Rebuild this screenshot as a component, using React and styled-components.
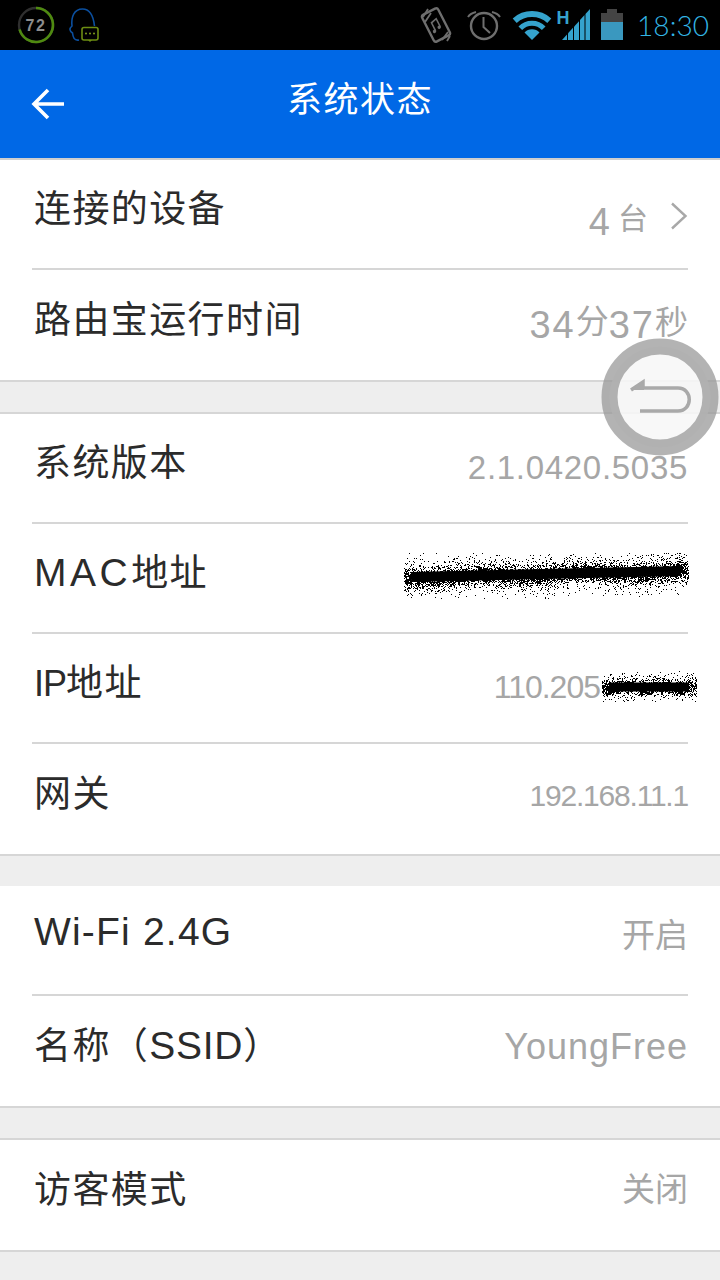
import React from "react";
import styled, { createGlobalStyle } from "styled-components";

const GlobalStyle = createGlobalStyle`
  html, body {
    margin: 0;
    padding: 0;
    background: #eeeeee;
    overflow: hidden;
  }
  body {
    font-family: "Liberation Sans", "Noto Sans CJK SC", sans-serif;
  }
`;

const TEAL = "#35a3cd";
const GREY = "#6e6e6e";

// seeded dots so the scribble looks the same on every run
const scribblePath = (w, h, y0, y1, count, seed) => {
  let s = seed;
  const rnd = () => {
    s = (s * 1664525 + 1013904223) % 4294967296;
    return s / 4294967296;
  };
  const gauss = () => (rnd() + rnd() + rnd() + rnd() - 2) / 2;
  let d = "";
  for (let i = 0; i < count; i++) {
    const t = rnd();
    const x = Math.round(2 + t * (w - 4));
    const mid = y0 + (y1 - y0) * t + Math.sin(t * 17) * 1.5;
    // most dots pile up in the core, the rest scatter around it
    const spread = i % 3 === 0 ? h * 0.72 : h * 0.34;
    const y = Math.round(mid + gauss() * spread);
    d += `M${x} ${y}h1v1h-1z`;
  }
  return d;
};

const Scribble = ({ width, height, from, to, thick, count, seed, className }) => (
  <svg className={className} width={width} height={height} viewBox={`0 0 ${width} ${height}`}>
    <path d={scribblePath(width, height, from, to, count, seed)} fill="#000" />
    <path d={`M9 ${from}L${width - 9} ${to}`} stroke="#000" strokeWidth={thick} />
  </svg>
);

const Page = styled.div`
  width: 720px;
  height: 1280px;
  position: relative;
  overflow: hidden;
  background: #eeeeee;
`;

const StatusBar = styled.div`
  height: 50px;
  background: #000;
  display: flex;
  align-items: flex-start;
`;

const Glyph = styled.svg`
  display: block;
  flex: none;
  margin-left: ${(p) => p.$left || 0}px;
`;

const Clock = styled.span`
  margin-left: 13px;
  font-family: "Lato", sans-serif;
  font-weight: 300;
  font-size: 28px;
  line-height: 50px;
  letter-spacing: 0.1px;
  color: #33b5e5;
  white-space: nowrap;
`;

const Header = styled.header`
  height: 108px;
  border-bottom: 2px solid #cfcfcf;
  background: #0068e6;
  display: flex;
  align-items: center;
  justify-content: center;
  position: relative;
`;

const BackButton = styled.svg`
  position: absolute;
  left: 30px;
  top: 35px;
`;

const Title = styled.h1`
  margin: 0 0 16px;
  font-size: 35px;
  font-weight: 400;
  letter-spacing: 1.5px;
  color: #fff;
`;

const Group = styled.section`
  background: #fff;
  border-top: ${(p) => (p.$plain ? "none" : "2px solid #d6d6d6")};
  border-bottom: 2px solid #d6d6d6;
  margin-bottom: 30px;
`;

const Row = styled.div`
  height: 110px;
  box-sizing: border-box;
  margin: 0 32px;
  padding: 0 0 16px 2px;
  display: flex;
  align-items: center;
  justify-content: space-between;
  &:not(:last-child) {
    border-bottom: 2px solid #d6d6d6;
  }
`;

const Label = styled.span`
  font-size: 37px;
  letter-spacing: 1.4px;
  color: #2b2b2b;
  white-space: nowrap;
`;

const Latin = styled.span`
  font-family: "Liberation Sans", sans-serif;
  font-size: ${(p) => p.$size || 39}px;
  letter-spacing: ${(p) => p.$track ?? 1}px;
`;

const Value = styled.span`
  display: flex;
  align-items: center;
  font-size: 33px;
  color: #a6a6a6;
  white-space: nowrap;
  padding-top: ${(p) => p.$drop || 0}px;
`;

const Hanzi = styled.span`
  display: inline-block;
  font-size: ${(p) => p.$size || 33}px;
  transform: translateY(${(p) => p.$shift || 0}px);
`;

const Digits = styled.span`
  display: inline-block;
  font-family: "Liberation Sans", sans-serif;
  font-size: ${(p) => p.$size || 33}px;
  letter-spacing: ${(p) => p.$track ?? 1}px;
  transform: translateY(${(p) => p.$shift || 0}px);
`;

const Chevron = styled.svg`
  margin-left: 22px;
  display: block;
`;

const MacScribble = styled(Scribble)`
  display: block;
  margin-right: -2px;
`;

const IpScribble = styled(Scribble)`
  display: block;
  margin-right: -10px;
`;

const FloatButton = styled.svg`
  position: absolute;
  left: 600px;
  top: 337px;
`;

const RingIcon = () => (
  <Glyph $left={17} width="38" height="50" viewBox="0 0 38 50">
    <circle cx="19" cy="25" r="17" fill="none" stroke="#2f2f2f" strokeWidth="2.4" />
    <path d="M19 8A17 17 0 1 1 2.6 29.5" fill="none" stroke="#4f8a10" strokeWidth="2.6" />
    <text x="19" y="31" textAnchor="middle" fontFamily="Liberation Sans" fontWeight="700" fontSize="16" letterSpacing="1.5" fill="#8d8d8d">
      72
    </text>
  </Glyph>
);

const PenguinIcon = () => (
  <Glyph $left={13} width="33" height="50" viewBox="0 0 33 50">
    <path
      d="M11 40C6 41 5 37 4.500 33C1.500 31 1 28.500 4 26C3 17 6 9 14.500 9C23 9 25.500 17 26.500 26"
      fill="none"
      stroke="#0b4f9f"
      strokeWidth="1.6"
    />
    <rect x="14" y="27.500" width="16" height="12.500" rx="2" fill="#000" stroke="#6c8d12" strokeWidth="1.6" />
    <path d="M20 40h4l-2 2z" fill="#6c8d12" />
    <circle cx="18" cy="33.500" r="1" fill="#7f9f1c" />
    <circle cx="22" cy="33.500" r="1" fill="#7f9f1c" />
    <circle cx="26" cy="33.500" r="1" fill="#7f9f1c" />
  </Glyph>
);

const VibrateIcon = () => (
  <Glyph $left={319} width="32" height="50" viewBox="0 0 32 50">
    <g transform="rotate(-27 16 25)">
      <rect x="7" y="10" width="18" height="30" rx="2.500" fill="none" stroke={GREY} strokeWidth="2.4" />
      <path d="M13 30v-9l6-1.500v9" fill="none" stroke={GREY} strokeWidth="1.600" />
      <circle cx="11.800" cy="30" r="1.700" fill={GREY} />
      <circle cx="17.800" cy="28.500" r="1.700" fill={GREY} />
    </g>
    <path d="M3 17L8 9M5 22L11 13M22 40L28 32M27 41L30 36" stroke={GREY} strokeWidth="1.800" />
  </Glyph>
);

const AlarmIcon = () => (
  <Glyph $left={14} width="36" height="50" viewBox="0 0 36 50">
    <circle cx="18" cy="26" r="13" fill="none" stroke={GREY} strokeWidth="2.4" />
    <path d="M17.500 17V27L24 33" fill="none" stroke={GREY} strokeWidth="2" />
    <path d="M2 17C4 14 6 13 10 12M26 12C30 13 32 14 34 17" fill="none" stroke={GREY} strokeWidth="2" />
  </Glyph>
);

const WifiIcon = () => (
  <Glyph $left={8} width="44" height="50" viewBox="0 0 44 50">
    <path d="M4.700 20.700A26 26 0 0 1 39.300 20.700" fill="none" stroke={TEAL} strokeWidth="6" />
    <path d="M10.300 28.300A16 16 0 0 1 33.700 28.300" fill="none" stroke={TEAL} strokeWidth="5" />
    <path d="M22 40L14.500 32.500A10.500 10.500 0 0 1 29.500 32.500Z" fill={TEAL} />
  </Glyph>
);

const SignalIcon = () => (
  <Glyph $left={1} width="37" height="50" viewBox="0 0 37 50">
    <text x="1.500" y="24" fontFamily="Liberation Sans" fontWeight="700" fontSize="18" fill={TEAL}>
      H
    </text>
    {[[7, 12], [13, 18], [19, 24], [25, 29.500], [30.500, 35]].map(([a, b]) => {
      const top = (x) => 40 - ((x - 7) * 31) / 28;
      return <polygon key={a} points={`${a},40 ${b},40 ${b},${top(b)} ${a},${top(a)}`} fill={TEAL} />;
    })}
  </Glyph>
);

const BatteryIcon = () => (
  <Glyph $left={8} width="24" height="50" viewBox="0 0 24 50">
    <path d="M7 9h10v4h6v9H1v-9h6z" fill="#444" />
    <rect x="1" y="22" width="22" height="18" fill="#3a98bf" />
  </Glyph>
);

const App = () => {
  return (
    <Page>
      <GlobalStyle />
      <StatusBar>
        <RingIcon />
        <PenguinIcon />
        <VibrateIcon />
        <AlarmIcon />
        <WifiIcon />
        <SignalIcon />
        <BatteryIcon />
        <Clock>18:30</Clock>
      </StatusBar>

      <Header>
        <BackButton width="36" height="38" viewBox="0 0 36 38">
          <path d="M34 19H5M18 5L4 19L18 33" fill="none" stroke="#fff" strokeWidth="3.600" />
        </BackButton>
        <Title>系统状态</Title>
      </Header>

      <Group $plain>
        <Row>
          <Label>连接的设备</Label>
          <Value $drop={20}>
            <Digits $size={38} $shift={6} $track={8}>4</Digits>
            <Hanzi $size={30}>台</Hanzi>
            <Chevron width="18" height="28" viewBox="0 0 18 28">
              <path d="M2 1.500L15.500 14L2 26.500" fill="none" stroke="#a8a8a8" strokeWidth="2.400" />
            </Chevron>
          </Value>
        </Row>
        <Row>
          <Label>路由宝运行时间</Label>
          <Value $drop={16}>
            <Digits $size={38} $track={2}>34</Digits>
            <Hanzi $size={33} $shift={-6}>分</Hanzi>
            <Digits $size={38} $track={2}>37</Digits>
            <Hanzi $size={33} $shift={-5}>秒</Hanzi>
          </Value>
        </Row>
      </Group>

      <Group>
        <Row>
          <Label>系统版本</Label>
          <Value $drop={16}>
            <Digits $track={0.7}>2.1.0420.5035</Digits>
          </Value>
        </Row>
        <Row>
          <Label>
            <Latin $track={3.5}>MAC</Latin>地址
          </Label>
          <Value $drop={12}>
            <MacScribble width={288} height={46} from={24} to={18} thick={10} count={7000} seed={7} />
          </Value>
        </Row>
        <Row>
          <Label>
            <Latin $size={36} $track={-1}>IP</Latin>地址
          </Label>
          <Value $drop={14}>
            <Digits $size={32} $track={-1}>110.205</Digits>
            <IpScribble width={98} height={32} from={16} to={16} thick={9} count={2000} seed={23} />
          </Value>
        </Row>
        <Row>
          <Label>网关</Label>
          <Value $drop={10}>
            <Digits $size={30} $track={-1.2}>192.168.11.1</Digits>
          </Value>
        </Row>
      </Group>

      <Group $plain>
        <Row>
          <Label>
            <Latin $track={1.2}>Wi-Fi 2.4G</Latin>
          </Label>
          <Value $drop={2}>开启</Value>
        </Row>
        <Row>
          <Label>
            名称（<Latin $track={0.75}>SSID</Latin>）
          </Label>
          <Value $drop={8}>
            <Digits $size={36} $track={1}>YoungFree</Digits>
          </Value>
        </Row>
      </Group>

      <Group>
        <Row>
          <Label>访客模式</Label>
          <Value>关闭</Value>
        </Row>
      </Group>

      <FloatButton width="120" height="120" viewBox="0 0 120 120">
        <circle cx="60" cy="60" r="50.500" fill="rgba(247,247,247,0.88)" stroke="rgba(150,150,150,0.72)" strokeWidth="16" />
        <path d="M31 53L43 45V51H78C93 51 93 74 78 74H40" fill="none" stroke="#a9a9a9" strokeWidth="3.500" />
        <path d="M31 53L44 45V53Z" fill="#a9a9a9" />
      </FloatButton>
    </Page>
  );
};

export default App;
